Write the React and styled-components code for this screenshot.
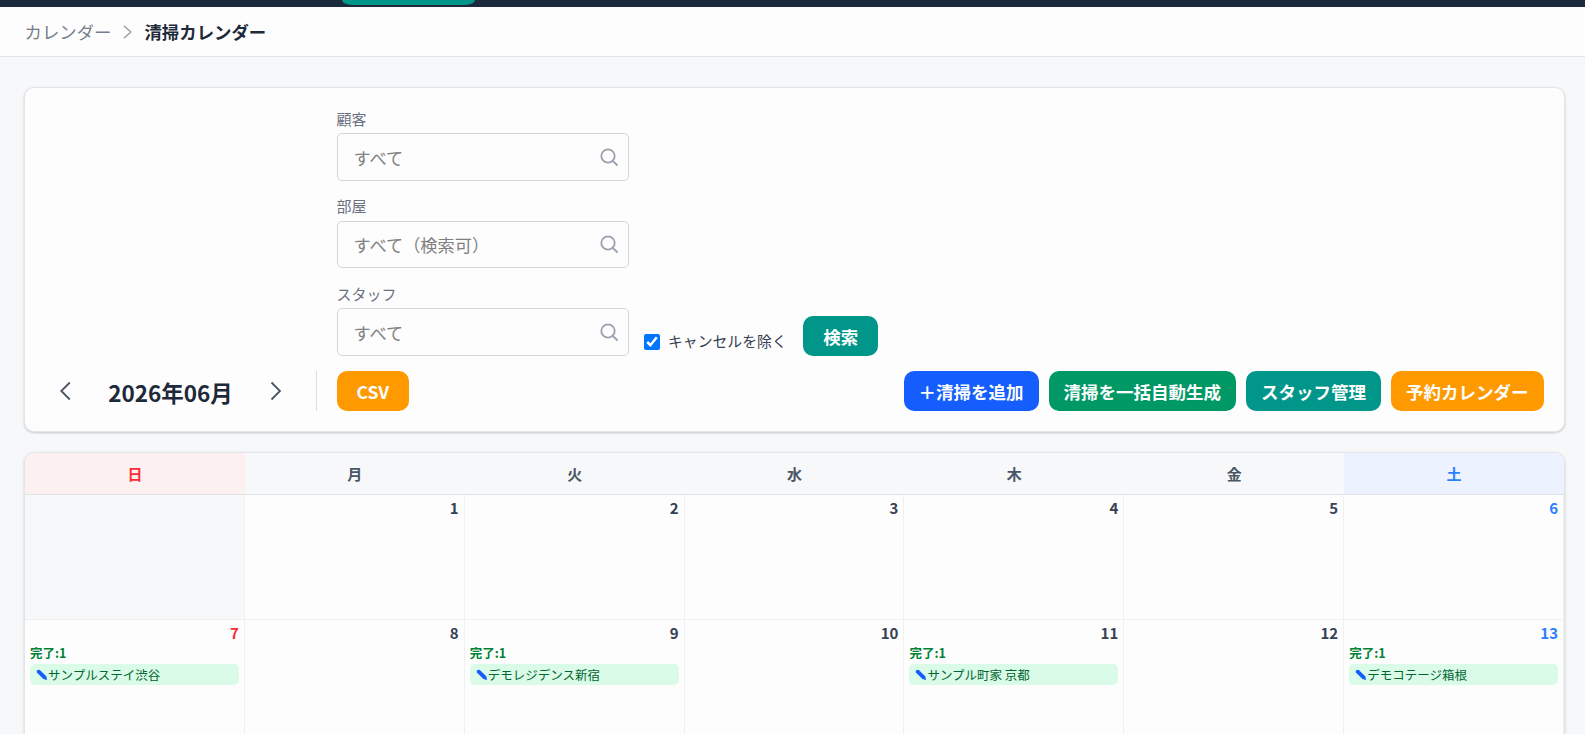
import styled, { createGlobalStyle } from "styled-components";

const GlobalStyle = createGlobalStyle`
* {
  box-sizing: border-box;
}
body {
  margin: 0;
  height: 734px;
  overflow: hidden;
  background: #f7f8fa;
  color: #1e2939;
  font-family: "Noto Sans CJK JP", sans-serif;
}
`;

const Page = styled.div`
height: 734px;
overflow: hidden;
`;

const TopBar = styled.header`
height: 7px;
padding-left: 341.5px;
background: #1d293d;
`;

const ActiveTab = styled.div`
width: 133px;
height: 5px;
border-radius: 0 0 10px 10px / 0 0 5px 5px;
background: #009689;
`;

const Breadcrumb = styled.nav`
display: flex;
align-items: center;
height: 50px;
padding: 0 24.5px;
border-bottom: 1px solid #e2e4e9;
background: #fdfdfd;
font-size: 17.4px;
line-height: 25px;
color: #767e8c;
`;

const CrumbArrow = styled.svg`
width: 9px;
height: 14px;
margin: 0 12px 0 12px;
fill: none;
stroke: #99a1af;
stroke-width: 1.5;
`;

const Current = styled.span`
font-weight: 700;
color: #1e2939;
`;

const Content = styled.main`
padding: 30px 20px 0 24px;
`;

const Card = styled.section`
border: 1px solid #e3e5e9;
border-radius: 10px;
background: #fdfdfd;
box-shadow: 0 1px 3px rgba(0, 0, 0, 0.1), 0 1px 2px rgba(0, 0, 0, 0.1);
`;

const Toolbar = styled(Card)`
display: flex;
align-items: flex-end;
height: 345px;
padding: 20px 20.5px 20px 20px;
`;

const MonthNav = styled.div`
display: flex;
align-items: center;
width: 271.5px;
height: 40px;
border-right: 1px solid #d9dce2;
`;

const NavButton = styled.button`
display: flex;
align-items: center;
justify-content: center;
width: 40px;
height: 40px;
padding: 0;
border: 0;
background: none;
color: #4a5565;

svg {
  width: 12px;
  height: 20px;
  fill: none;
  stroke: currentColor;
  stroke-width: 1.8;
}
`;

const Month = styled.h1`
width: 171px;
margin: 0;
padding-top: 2px;
font-size: 22.5px;
font-weight: 700;
line-height: 35px;
text-align: center;
`;

const Main = styled.div`
display: flex;
flex: 1;
flex-direction: column;
gap: 15px;
padding-left: 20px;
`;

const Filters = styled.div`
display: flex;
align-items: flex-end;
`;

const Fields = styled.div`
display: flex;
flex-direction: column;
gap: 15px;
width: 292.5px;
`;

const Field = styled.label`
display: block;
height: 72.5px;
font-size: 15px;
line-height: 19px;
color: #6a7282;
`;

const InputBox = styled.div`
display: flex;
align-items: center;
height: 47.5px;
margin-top: 5.5px;
padding: 0 10px 0 16px;
border: 1px solid #d1d5dc;
border-radius: 5px;

input {
  flex: 1;
  min-width: 0;
  padding: 1px 0 0;
  border: 0;
  outline: 0;
  background: none;
  font: 17.2px/25px "Noto Sans CJK JP", sans-serif;
}
input::placeholder {
  color: #808080;
}
svg {
  width: 18px;
  height: 18px;
  fill: none;
  stroke: #99a1af;
  stroke-width: 1.8;
  stroke-linecap: round;
}
`;

const CheckLabel = styled.label`
display: flex;
align-items: center;
gap: 8px;
height: 20px;
margin: 0 16.5px 4px 15px;
font-size: 14.85px;
line-height: 20px;
color: #364153;

input {
  width: 16px;
  height: 16px;
  margin: 0;
  accent-color: #0075ff;
}
span {
  margin-top: -2px;
}
`;

const Button = styled.button`
height: 40px;
padding: 1px ${props => props.$wide ? "20px" : "15px"} 0;
border: 0;
border-radius: 10px;
background: ${props => props.$color};
color: #fdfdfd;
font: 700 17.5px/25px "Noto Sans CJK JP", sans-serif;
white-space: nowrap;
`;

const Actions = styled.div`
display: flex;
gap: 10px;

button:first-child {
  margin-right: auto;
}
`;

const Calendar = styled(Card)`
height: 400px;
margin-top: 20px;
overflow: hidden;
`;

const Week = styled.div`
display: grid;
grid-template-columns: repeat(7, 1fr);
`;

const WeekHead = styled(Week)`
height: 42px;
border-bottom: 1px solid #dfe2e7;
background: #f7f8fa;
`;

const dayColors = { sun: "#fb2c36", sat: "#2b7fff" };
const headColors = { sun: "#fdf0f0", sat: "#ecf3fe" };

const DayName = styled.div`
padding-top: 1px;
background: ${props => headColors[props.$kind] || "transparent"};
color: ${props => dayColors[props.$kind] || "#4a5565"};
font-size: 15px;
font-weight: 700;
line-height: 39px;
text-align: center;
`;

const Cell = styled.div`
height: 125px;
padding: 5px;
border-right: 1px solid #eff0f3;
border-bottom: 1px solid #eff0f3;
background: ${props => props.$empty ? "#f7f8fa" : "transparent"};
`;

const DayNumber = styled.div`
margin-bottom: 3px;
color: ${props => dayColors[props.$kind] || "#364153"};
font-size: 15px;
font-weight: 700;
line-height: 16px;
text-align: right;
`;

const Status = styled.div`
color: #008236;
font-size: 12.5px;
font-weight: 700;
line-height: 18px;
`;

const Chip = styled.div`
display: flex;
align-items: center;
height: 21px;
margin-top: 2px;
padding-left: 6px;
border-radius: 5px;
background: #dafbe7;
color: #016630;
font-size: 12.5px;
line-height: 19px;
white-space: nowrap;

svg {
  width: 12px;
  height: 12px;
}
`;

const kinds = ["sun", "", "", "", "", "", "sat"];
const dayNames = ["日", "月", "火", "水", "木", "金", "土"];
const weeks = [
  [null, 1, 2, 3, 4, 5, 6],
  [7, 8, 9, 10, 11, 12, 13],
];
const cleanings = {
  7: "サンプルステイ渋谷",
  9: "デモレジデンス新宿",
  11: "サンプル町家 京都",
  13: "デモコテージ箱根",
};
const filters = [
  { label: "顧客", placeholder: "すべて" },
  { label: "部屋", placeholder: "すべて（検索可）" },
  { label: "スタッフ", placeholder: "すべて" },
];

function SearchIcon() {
  return (
    <svg viewBox="0 0 18 18">
      <circle cx="8" cy="8" r="6.7" />
      <path d="M12.8 12.8 L17 17" />
    </svg>
  );
}

function PencilIcon() {
  return (
    <svg viewBox="0 0 12 12">
      <path d="M0.8 1.3 L3.6 0.7 L10.2 7.2 L11.1 10.9 L7.4 10.1 L0.9 3.6 Z" fill="#155dfc" />
    </svg>
  );
}

function App() {
  const pintarDia = (day, index) => (
    <Cell key={index} $empty={!day}>
      {day && <DayNumber $kind={kinds[index]}>{day}</DayNumber>}
      {cleanings[day] && (
        <>
          <Status>完了:1</Status>
          <Chip><PencilIcon />{cleanings[day]}</Chip>
        </>
      )}
    </Cell>
  );

  return (
    <Page>
      <GlobalStyle />
      <TopBar><ActiveTab /></TopBar>
      <Breadcrumb>
        <span>カレンダー</span>
        <CrumbArrow viewBox="0 0 9 14"><path d="M1 0.8 L7.8 7 L1 13.2" /></CrumbArrow>
        <Current>清掃カレンダー</Current>
      </Breadcrumb>
      <Content>
        <Toolbar>
          <MonthNav>
            <NavButton><svg viewBox="0 0 12 20"><path d="M10.8 1.5 L2.3 10 L10.8 18.5" /></svg></NavButton>
            <Month>2026年06月</Month>
            <NavButton><svg viewBox="0 0 12 20"><path d="M1.5 1.5 L10 10 L1.5 18.5" /></svg></NavButton>
          </MonthNav>
          <Main>
            <Filters>
              <Fields>
                {filters.map((f) => (
                  <Field key={f.label}>
                    {f.label}
                    <InputBox>
                      <input placeholder={f.placeholder} />
                      <SearchIcon />
                    </InputBox>
                  </Field>
                ))}
              </Fields>
              <CheckLabel>
                <input type="checkbox" defaultChecked />
                <span>キャンセルを除く</span>
              </CheckLabel>
              <Button $color="#009689" $wide>検索</Button>
            </Filters>
            <Actions>
              <Button $color="#fe9a00" $wide>CSV</Button>
              <Button $color="#155dfc">＋清掃を追加</Button>
              <Button $color="#009966">清掃を一括自動生成</Button>
              <Button $color="#009689">スタッフ管理</Button>
              <Button $color="#fe9a00">予約カレンダー</Button>
            </Actions>
          </Main>
        </Toolbar>
        <Calendar>
          <WeekHead>
            {dayNames.map((name, index) => (
              <DayName key={name} $kind={kinds[index]}>{name}</DayName>
            ))}
          </WeekHead>
          {weeks.map((week, index) => (
            <Week key={index}>{week.map(pintarDia)}</Week>
          ))}
        </Calendar>
      </Content>
    </Page>
  );
}

export default App;
